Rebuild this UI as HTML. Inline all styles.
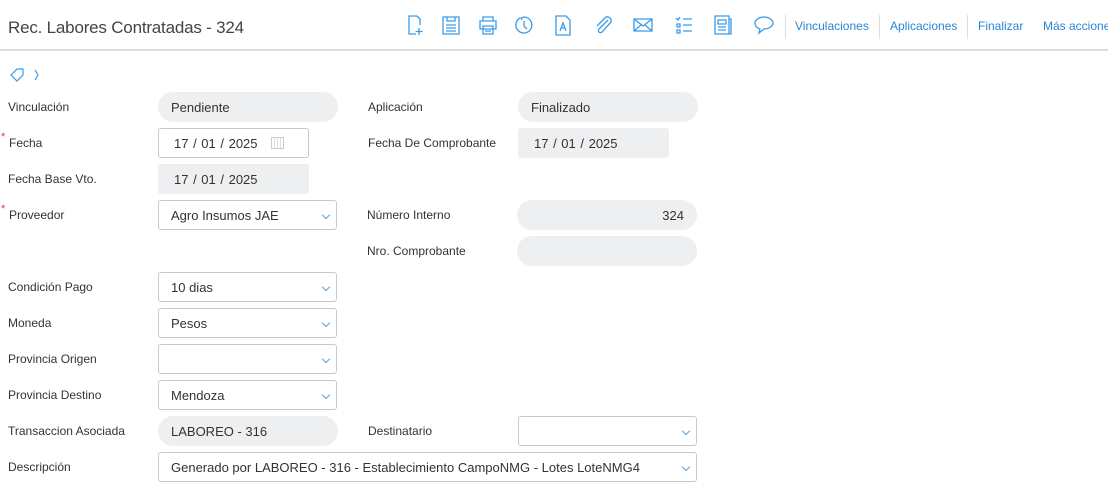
<!DOCTYPE html>
<html><head><meta charset="utf-8"><style>
*{box-sizing:border-box;margin:0;padding:0}
body{width:1108px;height:488px;overflow:hidden;background:#fff;font-family:"Liberation Sans",sans-serif;color:#333;position:relative}
.title{position:absolute;left:8px;top:18px;font-size:17px;color:#444;letter-spacing:-0.2px}
.hline{position:absolute;left:0;top:49px;width:1108px;height:2px;background:#ddd}
.ico{position:absolute;top:14px;width:22px;height:22px}
.ico svg{width:22px;height:22px;fill:none;stroke:#3a9be8;stroke-width:1.3}
.lnk{position:absolute;top:19px;font-size:12px;color:#2a86d6;white-space:nowrap}
.sep{position:absolute;top:15px;width:1px;height:24px;background:#ddd}
.lbl{position:absolute;font-size:12px;color:#333}
.f{position:absolute;height:30px;font-size:13px;color:#333;padding-left:13px;line-height:31px}
.ro{background:#eeeff1;border-radius:15px}
.rd{background:#eeeff1;border-radius:3px}
.in{border:1px solid #c8c8c8;border-radius:3px;line-height:29px;background:#fff;padding-left:12px}
.chev{position:absolute;right:7px;top:11px;width:6px;height:6px;border-right:1.3px solid #5a9fdc;border-bottom:1.3px solid #5a9fdc;transform:rotate(45deg)}
.req{position:absolute;color:#e33;font-size:11px}
</style></head><body>
<div class="title">Rec. Labores Contratadas - 324</div>
<div class="ico" style="left:404px"><svg viewBox="0 0 22 22"><path d="M13 2H5v18h7M13 2l3 3v6M15 14v7M11.5 17.5h7"/></svg></div>
<div class="ico" style="left:440px"><svg viewBox="0 0 22 22"><path d="M3 3h16v17H3zM7 3v4h8V3M6 11h10M6 14h10M6 17h10"/></svg></div>
<div class="ico" style="left:477px"><svg viewBox="0 0 22 22"><path d="M6 7V3h10v4M3 7h16v8H3zM6 12h10v8H6zM8 15h6M8 17h6"/></svg></div>
<div class="ico" style="left:513px"><svg viewBox="0 0 22 22"><path d="M7 4a8 8 0 1 0 4-1M11 3l-3 1 1 2M11 7v5l3 3"/></svg></div>
<div class="ico" style="left:552px"><svg viewBox="0 0 22 22"><path d="M4 2h10l4 4v15H4zM8 17l3-8 3 8M9 14h4"/></svg></div>
<div class="ico" style="left:592px"><svg viewBox="0 0 22 22"><path d="M16 6l-9 9a2 2 0 0 0 3 3l9-10a4 4 0 0 0-5-5L5 12"/></svg></div>
<div class="ico" style="left:632px"><svg viewBox="0 0 22 22"><path d="M2 5h18v12H2zM2 5l9 7 9-7M2 17l7-6M20 17l-7-6"/></svg></div>
<div class="ico" style="left:673px"><svg viewBox="0 0 22 22"><path d="M3 4l2 2 2-3M4 10h3v3H4zM4 16h3v3H4zM10 5h9M10 11h9M10 17h9"/></svg></div>
<div class="ico" style="left:712px"><svg viewBox="0 0 22 22"><path d="M3 2h14v18H3zM17 5h2v15H5M6 6h8v4H6zM6 13h8M6 16h8"/></svg></div>
<div class="ico" style="left:753px"><svg viewBox="0 0 22 22"><path d="M11 3c5 0 9 3 9 6s-4 6-9 6l-5 4 1-4c-3-1-5-3-5-6 0-3 4-6 9-6z"/></svg></div>
<div class="sep" style="left:785px"></div><div class="lnk" style="left:795px">Vinculaciones</div>
<div class="sep" style="left:879px"></div><div class="lnk" style="left:890px">Aplicaciones</div>
<div class="sep" style="left:967px"></div><div class="lnk" style="left:978px">Finalizar</div>
<div class="lnk" style="left:1043px">Más acciones</div>
<div class="hline"></div>
<svg style="position:absolute;left:10px;top:67px" width="32" height="16" viewBox="0 0 32 16" fill="none" stroke="#3a9be8" stroke-width="1.2"><path d="M1 8l6-6h6v6l-6 6zM9.5 5.5h.1M25 3l3 5-3 5"/></svg>

<div class="lbl" style="left:8px;top:100px">Vinculación</div><div class="f ro" style="left:158px;top:92px;width:180px">Pendiente</div>
<div class="lbl" style="left:368px;top:100px">Aplicación</div><div class="f ro" style="left:518px;top:92px;width:180px">Finalizado</div>

<div class="req" style="left:1px;top:131px">*</div><div class="lbl" style="left:9px;top:136px">Fecha</div>
<div class="f in" style="left:158px;top:128px;width:151px;padding-left:15px;word-spacing:1px">17 / 01 / 2025<span style="position:absolute;left:112px;top:8px;width:13px;height:12px;border:1px solid #ccc;background:repeating-linear-gradient(90deg,#fff 0 2px,#ddd 2px 3px)"></span></div>
<div class="lbl" style="left:368px;top:136px">Fecha De Comprobante</div><div class="f rd" style="left:518px;top:128px;width:151px;padding-left:16px;word-spacing:1px">17 / 01 / 2025</div>

<div class="lbl" style="left:8px;top:172px">Fecha Base Vto.</div><div class="f rd" style="left:158px;top:164px;width:151px;padding-left:16px;word-spacing:1px">17 / 01 / 2025</div>

<div class="req" style="left:1px;top:203px">*</div><div class="lbl" style="left:9px;top:208px">Proveedor</div>
<div class="f in" style="left:158px;top:200px;width:179px">Agro Insumos JAE<span class="chev"></span></div>
<div class="lbl" style="left:367px;top:208px">Número Interno</div><div class="f ro" style="left:517px;top:200px;width:180px;text-align:right;padding-right:13px">324</div>
<div class="lbl" style="left:367px;top:244px">Nro. Comprobante</div><div class="f ro" style="left:517px;top:236px;width:180px"></div>

<div class="lbl" style="left:8px;top:280px">Condición Pago</div><div class="f in" style="left:158px;top:272px;width:179px">10 dias<span class="chev"></span></div>
<div class="lbl" style="left:8px;top:316px">Moneda</div><div class="f in" style="left:158px;top:308px;width:179px">Pesos<span class="chev"></span></div>
<div class="lbl" style="left:8px;top:352px">Provincia Origen</div><div class="f in" style="left:158px;top:344px;width:179px"><span class="chev"></span></div>
<div class="lbl" style="left:8px;top:388px">Provincia Destino</div><div class="f in" style="left:158px;top:380px;width:179px">Mendoza<span class="chev"></span></div>

<div class="lbl" style="left:8px;top:424px">Transaccion Asociada</div><div class="f ro" style="left:158px;top:416px;width:180px">LABOREO - 316</div>
<div class="lbl" style="left:368px;top:424px">Destinatario</div><div class="f in" style="left:518px;top:416px;width:179px"><span class="chev"></span></div>

<div class="lbl" style="left:8px;top:460px">Descripción</div><div class="f in" style="left:158px;top:452px;width:539px">Generado por LABOREO - 316 - Establecimiento CampoNMG - Lotes LoteNMG4<span class="chev"></span></div>
</body></html>
